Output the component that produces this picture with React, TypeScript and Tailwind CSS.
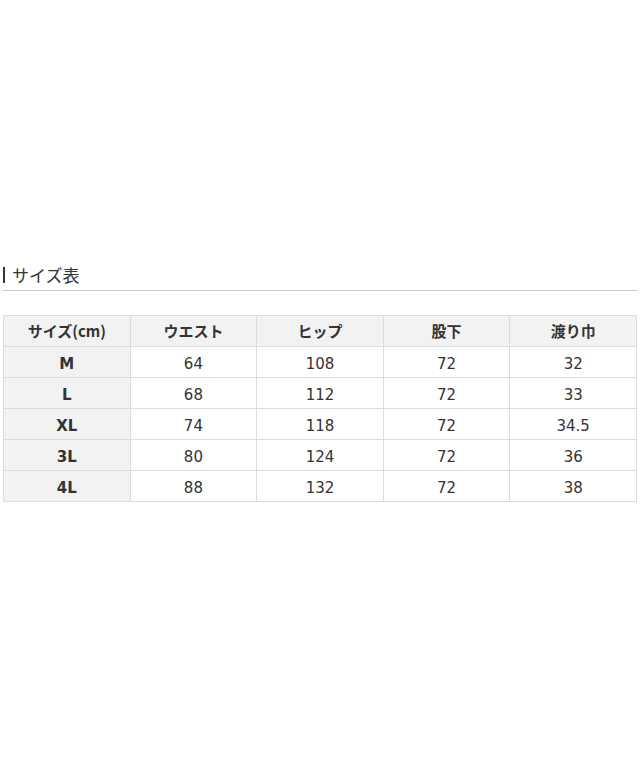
const rows = [
  { size: "M", waist: "64", hip: "108", inseam: "72", thigh: "32" },
  { size: "L", waist: "68", hip: "112", inseam: "72", thigh: "33" },
  { size: "XL", waist: "74", hip: "118", inseam: "72", thigh: "34.5" },
  { size: "3L", waist: "80", hip: "124", inseam: "72", thigh: "36" },
  { size: "4L", waist: "88", hip: "132", inseam: "72", thigh: "38" },
];

const headers = ["サイズ(cm)", "ウエスト", "ヒップ", "股下", "渡り巾"];

export default function App() {
  return (
    <div
      className="w-[640px] h-[768px] bg-white pt-[263px] px-[3px] text-[#333]"
      style={{ fontFamily: '"DejaVu Sans", "Noto Sans CJK JP", sans-serif' }}
    >
      {/* Title */}
      <div className="border-b border-[#c8c8c8] pb-[3px] flex items-center">
        <div className="w-[2px] h-[16px] bg-[#333]" />
        <h2
          className="ml-[7px] text-[17px] leading-[24px] font-normal"
          style={{ fontFamily: '"Noto Sans CJK JP", sans-serif' }}
        >
          サイズ表
        </h2>
      </div>

      {/* Size table */}
      <table className="mt-[24px] w-[634px] border-collapse table-fixed text-[15px]">
        <thead>
          <tr className="h-[31px] bg-[#f2f2f2]">
            {headers.map((h) => (
              <th
                key={h}
                className="border border-[#dcdcdc] font-bold text-center"
                style={{ fontFamily: '"Noto Sans CJK JP", sans-serif' }}
              >
                {h}
              </th>
            ))}
          </tr>
        </thead>
        <tbody>
          {rows.map((r) => (
            <tr key={r.size} className="h-[31px]">
              <td className="border border-[#dcdcdc] bg-[#f2f2f2] text-center font-bold pt-[4px]">{r.size}</td>
              <td className="border border-[#dcdcdc] text-center pt-[4px]">{r.waist}</td>
              <td className="border border-[#dcdcdc] text-center pt-[4px]">{r.hip}</td>
              <td className="border border-[#dcdcdc] text-center pt-[4px]">{r.inseam}</td>
              <td className="border border-[#dcdcdc] text-center pt-[4px]">{r.thigh}</td>
            </tr>
          ))}
        </tbody>
      </table>
    </div>
  );
}
